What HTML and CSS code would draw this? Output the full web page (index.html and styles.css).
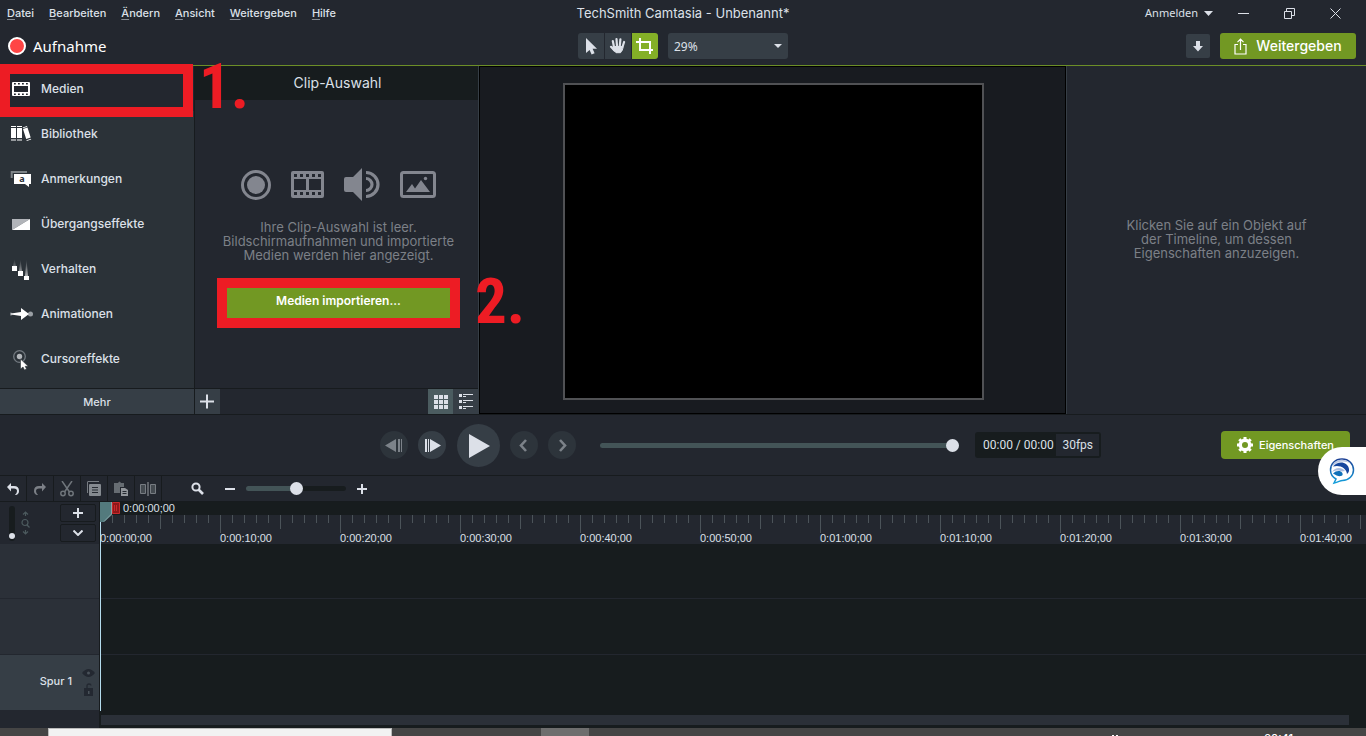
FILE: index.html
```html
<!DOCTYPE html>
<html lang="de">
<head>
<meta charset="utf-8">
<title>TechSmith Camtasia - Unbenannt*</title>
<link rel="stylesheet" href="styles.css">
</head>
<body>
<div class="app">
  <header class="header">
    <div class="titlebar">
      <nav class="menu" aria-label="Menü">
        <a href="#"><u>D</u>atei</a><a href="#"><u>B</u>earbeiten</a><a href="#"><u>Ä</u>ndern</a><a href="#"><u>A</u>nsicht</a><a href="#"><u>W</u>eitergeben</a><a href="#"><u>H</u>ilfe</a>
      </nav>
      <h1 class="title">TechSmith Camtasia - Unbenannt*</h1>
      <div class="window-tools">
        <button class="login">Anmelden <svg width="9" height="5" viewBox="0 0 9 5"><path d="M0 0h9L4.500 5z" fill="currentColor"/></svg></button>
        <button class="win" aria-label="Minimieren"><svg width="11" height="11" viewBox="0 0 11 11"><path d="M0 5.500h11" stroke="currentColor"/></svg></button>
        <button class="win" aria-label="Wiederherstellen"><svg width="11" height="11" viewBox="0 0 11 11" fill="none" stroke="currentColor"><path d="M.5 3.500h7v7h-7zM2.500 3.500v-3h8v7h-3"/></svg></button>
        <button class="win" aria-label="Schließen"><svg width="11" height="11" viewBox="0 0 11 11"><path d="M.5.5l10 10M10.500.5l-10 10" stroke="currentColor"/></svg></button>
      </div>
    </div>
    <div class="toolbar">
      <button class="record"><span class="record-dot"></span>Aufnahme</button>
      <div class="tools">
        <button class="tool tool-first" aria-label="Auswählen"><svg width="26" height="26" viewBox="0 0 26 26"><path d="M8 5v15l3.600-3 2 4.500 3-1.300-2-4.400H19z" fill="#dce0e8"/></svg></button>
        <button class="tool" aria-label="Verschieben"><svg width="26" height="26" viewBox="0 0 26 26" fill="none" stroke="#dce0e8" stroke-width="2.200" stroke-linecap="round"><path d="M9 14L7.800 8M12 13l-.5-6.800M14.800 13l.6-6.600M17.500 14l1.600-5M9.500 17.500L6 13.800"/><path d="M8.500 13.500h9.500c0 3-1 4.500-2.500 6.200h-4.500L8.500 17z" fill="#dce0e8" stroke-width="1"/></svg></button>
        <button class="tool tool-active" aria-label="Zuschneiden"><svg width="26" height="26" viewBox="0 0 26 26" fill="none" stroke="#fff" stroke-width="2"><path d="M4 9h14v12M8 5v12h13"/></svg></button>
        <div class="zoom-select">
          <select aria-label="Zoom"><option>29%</option><option>50%</option><option>100%</option></select>
          <svg class="zoom-arrow" width="8" height="4" viewBox="0 0 8 4"><path d="M0 0h8L4 4z" fill="#dce0e8"/></svg>
        </div>
      </div>
      <div class="share-tools">
        <button class="download" aria-label="Herunterladen"><svg width="10" height="11" viewBox="0 0 10 11"><path d="M3 0h4v5h3l-5 5.500L0 5h3z" fill="#dce0e8"/></svg></button>
        <button class="share"><svg width="13" height="17" viewBox="0 0 13 17" fill="none" stroke="#fff" stroke-width="1.200"><path d="M4 6.500H1v9.500h11V6.500H9M6.500 12V1.200M3.500 4.200l3-3 3 3"/></svg>Weitergeben</button>
      </div>
    </div>
  </header>

  <main class="workspace">
    <aside class="sidebar">
      <nav class="nav" aria-label="Bereiche">
        <button class="nav-item nav-active"><svg width="22" height="22" viewBox="0 0 22 22"><path fill="#fff" fill-rule="evenodd" d="M3 4h16q1 0 1 1v12q0 1-1 1H3q-1 0-1-1V5q0-1 1-1zM4 8v6h14V8zM4 5v1.500h1.800V5zm4 0v1.500h1.800V5zm4 0v1.500h1.800V5zm4 0v1.500h1.800V5zM4 15.500V17h1.800v-1.500zm4 0V17h1.800v-1.500zm4 0V17h1.800v-1.500zm4 0V17h1.800v-1.500z"/></svg>Medien</button>
        <button class="nav-item"><svg width="22" height="22" viewBox="0 0 22 22" fill="#fff"><path d="M1 5h5v10H1zM7 5h5v10H7zM13 6l4.500-1.400 3.200 10-4.500 1.500zM1 3h5v1H1zM7 3h5v1H7zM1 16.500h5v1H1zM7 16.500h5v1H7zM12.700 4.500L17 3l.3.800-4.300 1.400zM16.500 17.200l4.500-1.400.2.800-4.500 1.400z"/></svg>Bibliothek</button>
        <button class="nav-item"><svg width="22" height="22" viewBox="0 0 22 22"><path d="M1.700 10V4H17" fill="none" stroke="#7c8387" stroke-width="2"/><path d="M4 6h17v10h-2v3l-4-3H4z" fill="#fff"/><text x="12" y="13.500" font-size="9" font-weight="700" text-anchor="middle" font-family="Noto Sans, sans-serif" fill="#2b3238">a</text></svg>Anmerkungen</button>
        <button class="nav-item"><svg width="22" height="22" viewBox="0 0 22 22"><path d="M2 6h18L2 17z" fill="#b1b4b9"/><path d="M20 6v11H2z" fill="#fff"/></svg>Übergangseffekte</button>
        <button class="nav-item"><svg width="22" height="22" viewBox="0 0 22 22"><defs><linearGradient id="trail" x1="0" y1="0" x2="0" y2="1"><stop offset="0" stop-color="#fff" stop-opacity="0"/><stop offset="1" stop-color="#fff" stop-opacity=".6"/></linearGradient></defs><path d="M4.500 1l1.500 7H3zM10.500 1l1.500 12H9zM16.500 1l1.500 17h-3z" fill="url(#trail)"/><path d="M2 8h5v5H2zM8 13h5v5H8zM14 18h5v4h-5z" fill="#fff"/></svg>Verhalten</button>
        <button class="nav-item"><svg width="24" height="22" viewBox="0 0 24 22"><circle cx="20.500" cy="11" r="2.500" fill="#9a9fa4"/><circle cx="1" cy="11" r="1.500" fill="#7d8388"/><path d="M1 10.500l10-1.500V5l8 6-8 6v-4l-10-1.500z" fill="#fff"/></svg>Animationen</button>
        <button class="nav-item"><svg width="22" height="22" viewBox="0 0 22 22"><circle cx="9.500" cy="8.500" r="5.800" fill="none" stroke="#737a80" stroke-width="1.300"/><circle cx="9.500" cy="8.500" r="2.700" fill="#b3b7bb"/><path d="M10.500 11v10l2.500-2 1.500 3 2-1-1.300-2.700h3z" fill="#fff" stroke="#2b3238" stroke-width=".6"/></svg>Cursoreffekte</button>
      </nav>
      <button class="more">Mehr</button>
      <div class="callout callout-one"></div>
    </aside>

    <section class="bin">
      <h2 class="bin-title">Clip-Auswahl</h2>
      <div class="bin-body">
        <div class="bin-icons">
          <svg width="30" height="34" viewBox="0 0 30 34"><circle cx="15" cy="17" r="13.500" fill="none" stroke="#83868f" stroke-width="3"/><circle cx="15" cy="17" r="9" fill="#83868f"/></svg>
          <svg width="33" height="34" viewBox="0 0 33 34"><path fill="#83868f" fill-rule="evenodd" d="M2 3h29q2 0 2 2v23q0 2-2 2H2q-2 0-2-2V5q0-2 2-2zM3 11v11h12V11zM18 11v11h12V11zM3 6v3h3V6zm6 0v3h3V6zm6 0v3h3V6zm6 0v3h3V6zm6 0v3h3V6zM3 24v3h3v-3zm6 0v3h3v-3zm6 0v3h3v-3zm6 0v3h3v-3zm6 0v3h3v-3z"/></svg>
          <svg width="36" height="34" viewBox="0 0 36 34"><path d="M2 9h7l9-9v33l-9-9H2q-2 0-2-2V11q0-2 2-2z" fill="#83868f"/><path d="M22 10.500a6 6 0 0 1 0 12M22 4.500a12 12 0 0 1 0 24" fill="none" stroke="#83868f" stroke-width="3.200"/></svg>
          <svg width="36" height="34" viewBox="0 0 36 34"><rect x="1.500" y="4.500" width="33" height="24" rx="2" fill="none" stroke="#83868f" stroke-width="3"/><path d="M6 24l6-8 3 4.500L21 12l9 12z" fill="#83868f"/><circle cx="25.500" cy="10.500" r="1.700" fill="#83868f"/></svg>
        </div>
        <p class="hint">Ihre Clip-Auswahl ist leer.<br>Bildschirmaufnahmen und importierte<br>Medien werden hier angezeigt.</p>
        <div class="import-wrap">
          <button class="import">Medien importieren...</button>
          <div class="callout callout-two"></div>
        </div>
      </div>
      <div class="bin-footer">
        <button class="square" aria-label="Hinzufügen"><svg width="15" height="15" viewBox="0 0 15 15"><path d="M0 7.500h14M7 .5v14" stroke="#dce0e8" stroke-width="2"/></svg></button>
        <span class="grow"></span>
        <button class="square square-on" aria-label="Miniaturansicht"><svg width="14" height="14" viewBox="0 0 14 14"><path d="M0 0h4v4H0zM5 0h4v4H5zM10 0h4v4h-4zM0 5h4v4H0zM5 5h4v4H5zM10 5h4v4h-4zM0 10h4v4H0zM5 10h4v4H5zM10 10h4v4h-4z" fill="#dce0e8"/></svg></button>
        <button class="square" aria-label="Listenansicht"><svg width="14" height="15" viewBox="0 0 14 15"><path d="M0 0h3v3H0zM0 6h3v3H0zM0 12h3v3H0zM4 0h10v1H4zM4 2h3v1H4zM4 6h10v1H4zM4 8h3v1H4zM4 12h10v1H4zM4 14h3v1H4z" fill="#dce0e8"/></svg></button>
      </div>
      <strong class="step step-one">1.</strong>
      <strong class="step step-two">2.</strong>
    </section>

    <section class="stage" aria-label="Vorschau"><div class="preview"></div></section>

    <aside class="properties"><p class="hint">Klicken Sie auf ein Objekt auf<br>der Timeline, um dessen<br>Eigenschaften anzuzeigen.</p></aside>
  </main>

  <section class="player">
    <div class="transport">
      <div class="rounds">
        <button class="round dim" aria-label="Bild zurück"><svg width="28" height="28" viewBox="0 0 28 28" fill="#7c8289"><path d="M16 8v13L5 14.500zM18 8h2v13h-2zM21 8h1v13h-1z"/></svg></button>
        <button class="round" aria-label="Bild vor"><svg width="28" height="28" viewBox="0 0 28 28" fill="#dce0e8"><path d="M7 8h2v13H7zM10 8h1v13h-1zM12 8l11 6.500L12 21z"/></svg></button>
        <button class="round round-big" aria-label="Wiedergabe"><svg width="43" height="43" viewBox="0 0 43 43"><path d="M12 10l21 12-21 12z" fill="#dce0e8"/></svg></button>
        <button class="round dim" aria-label="Zurück"><svg width="28" height="28" viewBox="0 0 28 28"><path d="M16 9l-5 5.500 5 5.500" fill="none" stroke="#7c8289" stroke-width="2.600"/></svg></button>
        <button class="round dim" aria-label="Weiter"><svg width="28" height="28" viewBox="0 0 28 28"><path d="M12 9l5 5.500-5 5.500" fill="none" stroke="#7c8289" stroke-width="2.600"/></svg></button>
      </div>
      <input class="range seek" type="range" min="0" max="100" value="100" aria-label="Position">
      <div class="time"><span>00:00 / 00:00</span><span class="fps">30fps</span></div>
    </div>
    <button class="props"><svg width="16" height="16" viewBox="0 0 16 16"><circle cx="8" cy="8" r="4.700" fill="none" stroke="#fff" stroke-width="3.400"/><path d="M8 0v3M8 13v3M0 8h3M13 8h3M2.300 2.300l2 2M11.700 11.700l2 2M2.300 13.700l2-2M11.700 4.300l2-2" stroke="#fff" stroke-width="3"/></svg>Eigenschaften</button>
    <button class="chat" aria-label="Chat"><svg width="26" height="28" viewBox="0 0 26 28"><defs><linearGradient id="ring" x1="0" y1="0" x2="0" y2="1"><stop offset="0" stop-color="#1c3f94"/><stop offset="1" stop-color="#14a0dc"/></linearGradient></defs><path d="M13 2c7 0 11.500 5 11.500 11 0 5.500-4.500 10.500-11 10.500-2.500 0-3 1-8.500 2.500l2-4C3.500 20 1.500 17 1.500 13 1.500 7 6 2 13 2z" fill="#fff" stroke="url(#ring)" stroke-width="1.500"/><path d="M2.500 10C5 2 16 0 21.500 7c-6-4-13-3-19 3z" fill="#b9c6e2"/><path d="M4 9.500C9 3 19 4.500 20 12c.3 2-.5 4-2 5-.5-6-7-9.500-14-7.500z" fill="#17479e"/><path d="M3 15c3-5 10-5 13-1l-3 .5c-4-1.500-7-1-10 .5z" fill="#a9bce0"/><path d="M4 16.500c3-3.500 8-3 9-1 1 1.500 1 3-1 3.500-2 .5-5-.5-8-2.500z" fill="#1171b9"/></svg></button>
  </section>

  <section class="edit-bar">
    <button class="edit" aria-label="Rückgängig"><svg width="14" height="14" viewBox="0 0 14 14"><path d="M5 1v3h3q5 0 5 5 0 3-3 4h-1q2-1.500 2-4 0-2.500-3-2.500H5v3L1 5z" fill="#dce0e8"/></svg></button>
    <button class="edit" aria-label="Wiederholen"><svg width="14" height="14" viewBox="0 0 14 14"><path d="M9 1v3H6Q1 4 1 9q0 3 3 4h1Q3 11.500 3 9q0-2.500 3-2.500h3v3L13 5z" fill="#7c8087"/></svg></button>
    <button class="edit" aria-label="Ausschneiden"><svg width="14" height="16" viewBox="0 0 14 16" fill="none" stroke="#6f757b" stroke-width="1.500"><path d="M2 0l7.500 11M12 0L4.500 11"/><circle cx="3" cy="12.500" r="2.200"/><circle cx="11" cy="12.500" r="2.200"/></svg></button>
    <button class="edit" aria-label="Kopieren"><svg width="14" height="15" viewBox="0 0 14 15"><path d="M.5 12V1q0-.5.500-.5h11" fill="none" stroke="#777c82"/><path d="M3 3h10q1 0 1 1v10q0 1-1 1H3q-1 0-1-1V4q0-1 1-1z" fill="#858a90"/><path d="M5 6.500h6M5 9h6M5 11.500h6" stroke="#252a31"/></svg></button>
    <button class="edit" aria-label="Einfügen"><svg width="14" height="16" viewBox="0 0 14 16"><path d="M4 2q1.500-3 3 0h3v4H6v6H0V2z" fill="#666c72"/><path d="M7 7h4l3 2v6H7z" fill="#92969b"/><path d="M8.500 10.500h4M8.500 12.500h4" stroke="#252a31"/></svg></button>
    <button class="edit" aria-label="Teilen"><svg width="16" height="14" viewBox="0 0 16 14"><path d="M.5 2.500h5v9h-5zM10.500 2.500h5v9h-5z" fill="#444a50" stroke="#777c82"/><path d="M8 0v14" stroke="#9a9ea3"/></svg></button>
    <div class="zoom-tools">
      <svg width="13" height="13" viewBox="0 0 13 13" fill="none" stroke="#dce0e8"><circle cx="5" cy="5" r="3.600" stroke-width="2"/><path d="M7.500 7.500l4.500 4.500" stroke-width="2.600"/></svg>
      <button class="plain" aria-label="Verkleinern"><svg width="10" height="10" viewBox="0 0 10 10"><path d="M0 5h10" stroke="#dce0e8" stroke-width="2"/></svg></button>
      <input class="range zoom-range" type="range" min="0" max="100" value="50" aria-label="Timeline-Zoom">
      <button class="plain" aria-label="Vergrößern"><svg width="10" height="10" viewBox="0 0 10 10"><path d="M0 5h10M5 0v10" stroke="#dce0e8" stroke-width="2"/></svg></button>
    </div>
  </section>

  <section class="timeline">
    <div class="heads">
      <div class="head-tools">
        <input class="height-range" type="range" min="0" max="100" value="0" aria-label="Spurhöhe">
        <svg class="height-icon" width="9" height="24" viewBox="0 0 9 24" fill="none" stroke="#4c5a5e" stroke-width="1.200"><path d="M4.500 5V1M2 3.500L4.500 1 7 3.500M4.500 19v4M2 20.500L4.500 23 7 20.500"/><circle cx="4" cy="11.500" r="3"/><path d="M6 14l2.500 2.500"/></svg>
        <div class="head-buttons">
          <button aria-label="Spur hinzufügen"><svg width="10" height="10" viewBox="0 0 10 10"><path d="M0 5h10M5 0v10" stroke="#dce0e8" stroke-width="2"/></svg></button>
          <button aria-label="Spuren einklappen"><svg width="10" height="6" viewBox="0 0 10 6"><path d="M.5.5L5 5 9.500.5" fill="none" stroke="#dce0e8" stroke-width="2"/></svg></button>
        </div>
      </div>
      <div class="head"></div>
      <div class="head"></div>
      <div class="head head-track"><span>Spur 1</span>
        <div class="head-icons">
          <svg width="13" height="8" viewBox="0 0 13 8"><path d="M0 4q6.500-8 13 0-6.500 8-13 0z" fill="#232831"/><circle cx="6.500" cy="4" r="1.500" fill="#4a525a"/></svg>
          <svg width="9" height="13" viewBox="0 0 9 13"><path d="M0 5h9v8H0z" fill="#232831"/><path d="M3 6V3q0-2 2-2t2 1.500" fill="none" stroke="#232831" stroke-width="1.300"/><path d="M4 8h1.500v3H4z" fill="#4a525a"/></svg>
        </div>
      </div>
    </div>
    <div class="tracks">
      <div class="playbar">0:00:00;00
        <svg class="playhead" width="20" height="20" viewBox="0 0 20 20"><path d="M0 0h12v13l-8 7H0z" fill="#537a7d"/><path d="M11.500 0v12L4 19.500" fill="none" stroke="#86a5a8"/><path d="M12.500.5h7v11h-7z" fill="#8f1719" stroke="#c8282b"/><path d="M14.500 3v6M16.500 3v6" stroke="#c8282b"/></svg>
      </div>
      <div class="ruler"><span>0:00:00;00</span><span>0:00:10;00</span><span>0:00:20;00</span><span>0:00:30;00</span><span>0:00:40;00</span><span>0:00:50;00</span><span>0:01:00;00</span><span>0:01:10;00</span><span>0:01:20;00</span><span>0:01:30;00</span><span>0:01:40;00</span></div>
      <div class="lane"></div>
      <div class="lane"></div>
      <div class="lane lane-last"></div>
      <div class="scroll"></div>
      <div class="playline"></div>
    </div>
  </section>

  <footer class="taskbar"><div class="search"></div><div class="task-active"></div><svg class="tray" width="8" height="8" viewBox="0 0 8 8"><path d="M1 7h2v1H1zM5 7h2v1H5z" fill="#fff"/></svg><span class="clock">20:41</span></footer>
</div>
</body>
</html>
```
FILE: styles.css
```css
* { box-sizing: border-box; }
body { margin: 0; background: #23272f; color: #dce0e8; font: 500 12px/16px Inter, "Liberation Sans", sans-serif; }
button { border: 0; padding: 0; background: none; color: inherit; font: inherit; display: flex; align-items: center; justify-content: center; }
svg { display: block; flex: none; }
h1, h2, p { margin: 0; font-weight: 400; }
.app { display: flex; flex-direction: column; height: 100vh; overflow: hidden; }

.header { border-bottom: 1px solid #6c8e27; }
.titlebar, .toolbar { display: grid; grid-template-columns: 1fr auto 1fr; align-items: center; }
.titlebar { height: 26px; }
.toolbar { height: 39px; padding-top: 1px; }
.menu { display: flex; gap: 15px; padding-left: 7px; font-size: 11px; }
.menu a { color: inherit; text-decoration: none; }
.menu u { text-underline-offset: 2px; text-decoration-color: #888d95; }
.title { font-size: 13px; }
.window-tools { display: flex; justify-content: flex-end; align-items: center; padding-right: 8px; }
.login { gap: 6px; margin-right: 7px; font: 400 11px/16px "Noto Sans", sans-serif; }
.win { width: 46px; height: 26px; }
.record { justify-self: start; gap: 7px; padding-left: 8px; color: #fff; font: 400 15px/20px "Noto Sans", sans-serif; }
.record-dot { width: 18px; height: 18px; border: 2px solid #fff; border-radius: 50%; background: #ff4545; }
.tools { display: flex; gap: 1px; }
.tool { width: 26px; height: 26px; background: #363e46; }
.tool-first { border-radius: 3px 0 0 3px; }
.tool-active { background: #84b027; border-radius: 0 3px 3px 0; }
.zoom-select { position: relative; margin-left: 9px; }
.zoom-select select { display: block; appearance: none; width: 120px; height: 26px; padding: 0 6px; border: 0; border-radius: 3px; background: #363e46; color: #dce0e8; font: 400 12px "Noto Sans", sans-serif; }
.zoom-arrow { position: absolute; right: 6px; top: 11px; pointer-events: none; }
.share-tools { display: flex; justify-content: flex-end; align-items: center; gap: 10px; padding-right: 10px; }
.download { width: 24px; height: 24px; border-radius: 2px; background: #363e46; }
.share { width: 136px; height: 26px; gap: 9px; border-radius: 3px; background: #729823; color: #fff; font-size: 14px; font-weight: 500; }

.workspace { display: flex; border-bottom: 1px solid #171b1e; }
.sidebar { position: relative; flex: none; width: 195px; display: flex; flex-direction: column; background: #2b3238; border-right: 1px solid #171b1e; }
.nav { padding-bottom: 7px; }
.nav-item { width: 100%; height: 45px; justify-content: flex-start; padding-left: 10px; }
.nav-item svg { width: 24px; margin-right: 7px; }
.nav-item svg[width="22"] { width: 22px; margin-right: 9px; }
.nav-active { background: #23272f; }
.more { height: 26px; background: #363e46; border-top: 1px solid #171b1e; font-size: 11px; }
.callout { position: absolute; border: 10px solid #ed1c24; pointer-events: none; }
.callout-one { left: 0; right: 1px; top: -2px; height: 53px; }
.callout-two { inset: -10px; }

.bin { position: relative; flex: none; width: 284px; display: flex; flex-direction: column; border-right: 1px solid #363e46; }
.bin-title { height: 34px; padding-left: 2px; background: #171c1e; font-size: 14px; line-height: 34px; text-align: center; }
.bin-body { flex: 1; display: flex; flex-direction: column; align-items: center; padding: 68px 0 0 4px; }
.bin-icons { display: flex; gap: 20px; }
.hint { color: #7c8087; font-size: 13px; line-height: 14px; text-align: center; white-space: nowrap; }
.bin .hint { margin: 18px 0 26px; }
.import-wrap { position: relative; width: 223px; }
.import { width: 100%; height: 30px; padding-bottom: 4px; background: #729823; color: #fff; font-weight: 600; }
.bin-footer { display: flex; border-top: 1px solid #171b1e; }
.square { width: 25px; height: 25px; background: #363e46; }
.square-on { background: #4b5c60; }
.grow { flex: 1; }
.step { position: absolute; z-index: 2; color: #ed1c24; font: 700 63px/64px "Liberation Sans Narrow", "Roboto Condensed", "Open Sans Condensed", "DejaVu Sans Condensed", sans-serif; }
.step-one { left: 4px; top: -11px; }
.step-two { left: 280px; top: 204px; }

.stage { flex: 1; display: flex; justify-content: center; padding: 16px 0 13px 2px; background: #181b20; border: 1px solid #000; }
.preview { box-sizing: content-box; height: 313px; aspect-ratio: 4 / 3; border: 2px solid #505154; background: #000; }
.properties { flex: none; width: 300px; display: flex; align-items: center; justify-content: center; padding-bottom: 2px; border-left: 1px solid #363e46; }

.player { position: relative; display: flex; align-items: center; justify-content: space-between; height: 61px; padding: 0 16px 0 380px; border-bottom: 1px solid #171b1e; }
.transport { flex: 1; display: flex; align-items: center; margin-right: 120px; }
.rounds { flex: none; display: flex; align-items: center; justify-content: space-between; width: 196px; }
.round { flex: none; width: 28px; height: 28px; border-radius: 50%; background: #363e46; }
.dim { background: #2d343b; }
.round-big { width: 43px; height: 43px; }
.range { appearance: none; height: 13px; margin: 0; background: transparent; }
.range::-webkit-slider-runnable-track { height: 5px; border-radius: 3px; background: #435457; }
.range::-webkit-slider-thumb { appearance: none; width: 13px; height: 13px; margin-top: -4px; border-radius: 50%; background: #dce0e8; }
.seek { flex: 1; min-width: 80px; margin: 0 16px 0 24px; }
.time { display: flex; align-items: center; justify-content: space-between; width: 126px; height: 26px; padding: 2px 2px 2px 8px; border-radius: 3px; background: #171c1e; font: 400 12px/22px Roboto, sans-serif; white-space: nowrap; }
.fps { padding: 0 6px; background: #23272f; }
.props { flex: none; width: 129px; height: 28px; gap: 6px; border-radius: 4px; background: #729823; color: #fff; font-size: 11px; }
.chat { position: absolute; z-index: 3; right: 0; top: 32px; width: 48px; height: 48px; border-radius: 24px 0 0 24px; background: #fff; }

.edit-bar { display: flex; height: 26px; border-bottom: 1px solid #171b1e; }
.edit { width: 27px; border-right: 1px solid #171b1e; }
.zoom-tools { display: flex; align-items: center; gap: 11px; padding-left: 29px; }
.zoom-tools > svg { margin-right: 10px; }
.zoom-range { width: 100px; }
.zoom-range::-webkit-slider-runnable-track { background: linear-gradient(90deg, #435457 50%, #171c1e 50%); }
.plain { width: 10px; height: 20px; }

.timeline { flex: 1; display: flex; min-height: 0; }
.heads { flex: none; width: 100px; border-right: 1px solid #171b1e; }
.head-tools { display: flex; align-items: center; height: 42px; padding: 0 3px 0 9px; }
.height-range { appearance: none; writing-mode: vertical-lr; direction: rtl; width: 6px; height: 35px; margin: 0; padding-bottom: 2px; border-radius: 3px; background: #171c1e; }
.height-range::-webkit-slider-thumb { appearance: none; width: 6px; height: 6px; border-radius: 50%; background: #dce0e8; }
.height-icon { margin-left: 6px; }
.head-buttons { margin-left: auto; display: flex; flex-direction: column; gap: 2px; }
.head-buttons button { width: 36px; height: 18px; border: 1px solid #171b1e; border-radius: 2px; }
.head { height: 55px; background: #2b3038; border-bottom: 1px solid #23272f; }
.head + .head { height: 56px; }
.head-track { display: flex; align-items: center; justify-content: flex-end; gap: 10px; padding: 0 4px 4px; background: #363e46; }
.head-track span { font-size: 11px; }
.head-icons { display: flex; flex-direction: column; align-items: center; gap: 6px; padding-top: 4px; }
.tracks { position: relative; flex: 1; min-width: 0; overflow: hidden; background: #171c1e; }
.playbar { position: relative; height: 13px; padding-left: 23px; font: 400 11px/13px "Liberation Sans", sans-serif; }
.playhead { position: absolute; z-index: 2; left: 0; top: 0; }
.playline { position: absolute; left: 0; top: 0; bottom: 17px; width: 1px; background: #b5dcee; }
.ruler { display: flex; height: 29px; padding-top: 16px; background-color: #23272f; background-image: linear-gradient(90deg, #4b5359 1px, transparent 1px), linear-gradient(90deg, #4b5359 1px, transparent 1px), linear-gradient(90deg, #4b5359 1px, transparent 1px); background-size: 120px 18px, 60px 14px, 12px 8px; background-repeat: repeat-x; font: 400 11px/14px "Liberation Sans", sans-serif; }
.ruler span { flex: none; width: 120px; }
.lane { height: 55px; border-bottom: 1px solid #23272f; }
.lane + .lane { height: 56px; }
.lane-last { border-bottom: 0; }
.scroll { height: 10px; margin: 4px 17px 0 1px; background: #2b3038; }

.taskbar { flex: none; display: flex; height: 8px; overflow: hidden; background: #454545; }
.search { width: 344px; margin-left: 48px; background: #f2f2f2; border: 1px solid #bbb; border-bottom: 0; }
.task-active { width: 48px; margin-left: 149px; background: #6e6e6e; }
.tray { margin-left: auto; margin-right: 145px; }
.clock { padding: 2px 73px 0 0; color: #fff; font-size: 11px; }
```
